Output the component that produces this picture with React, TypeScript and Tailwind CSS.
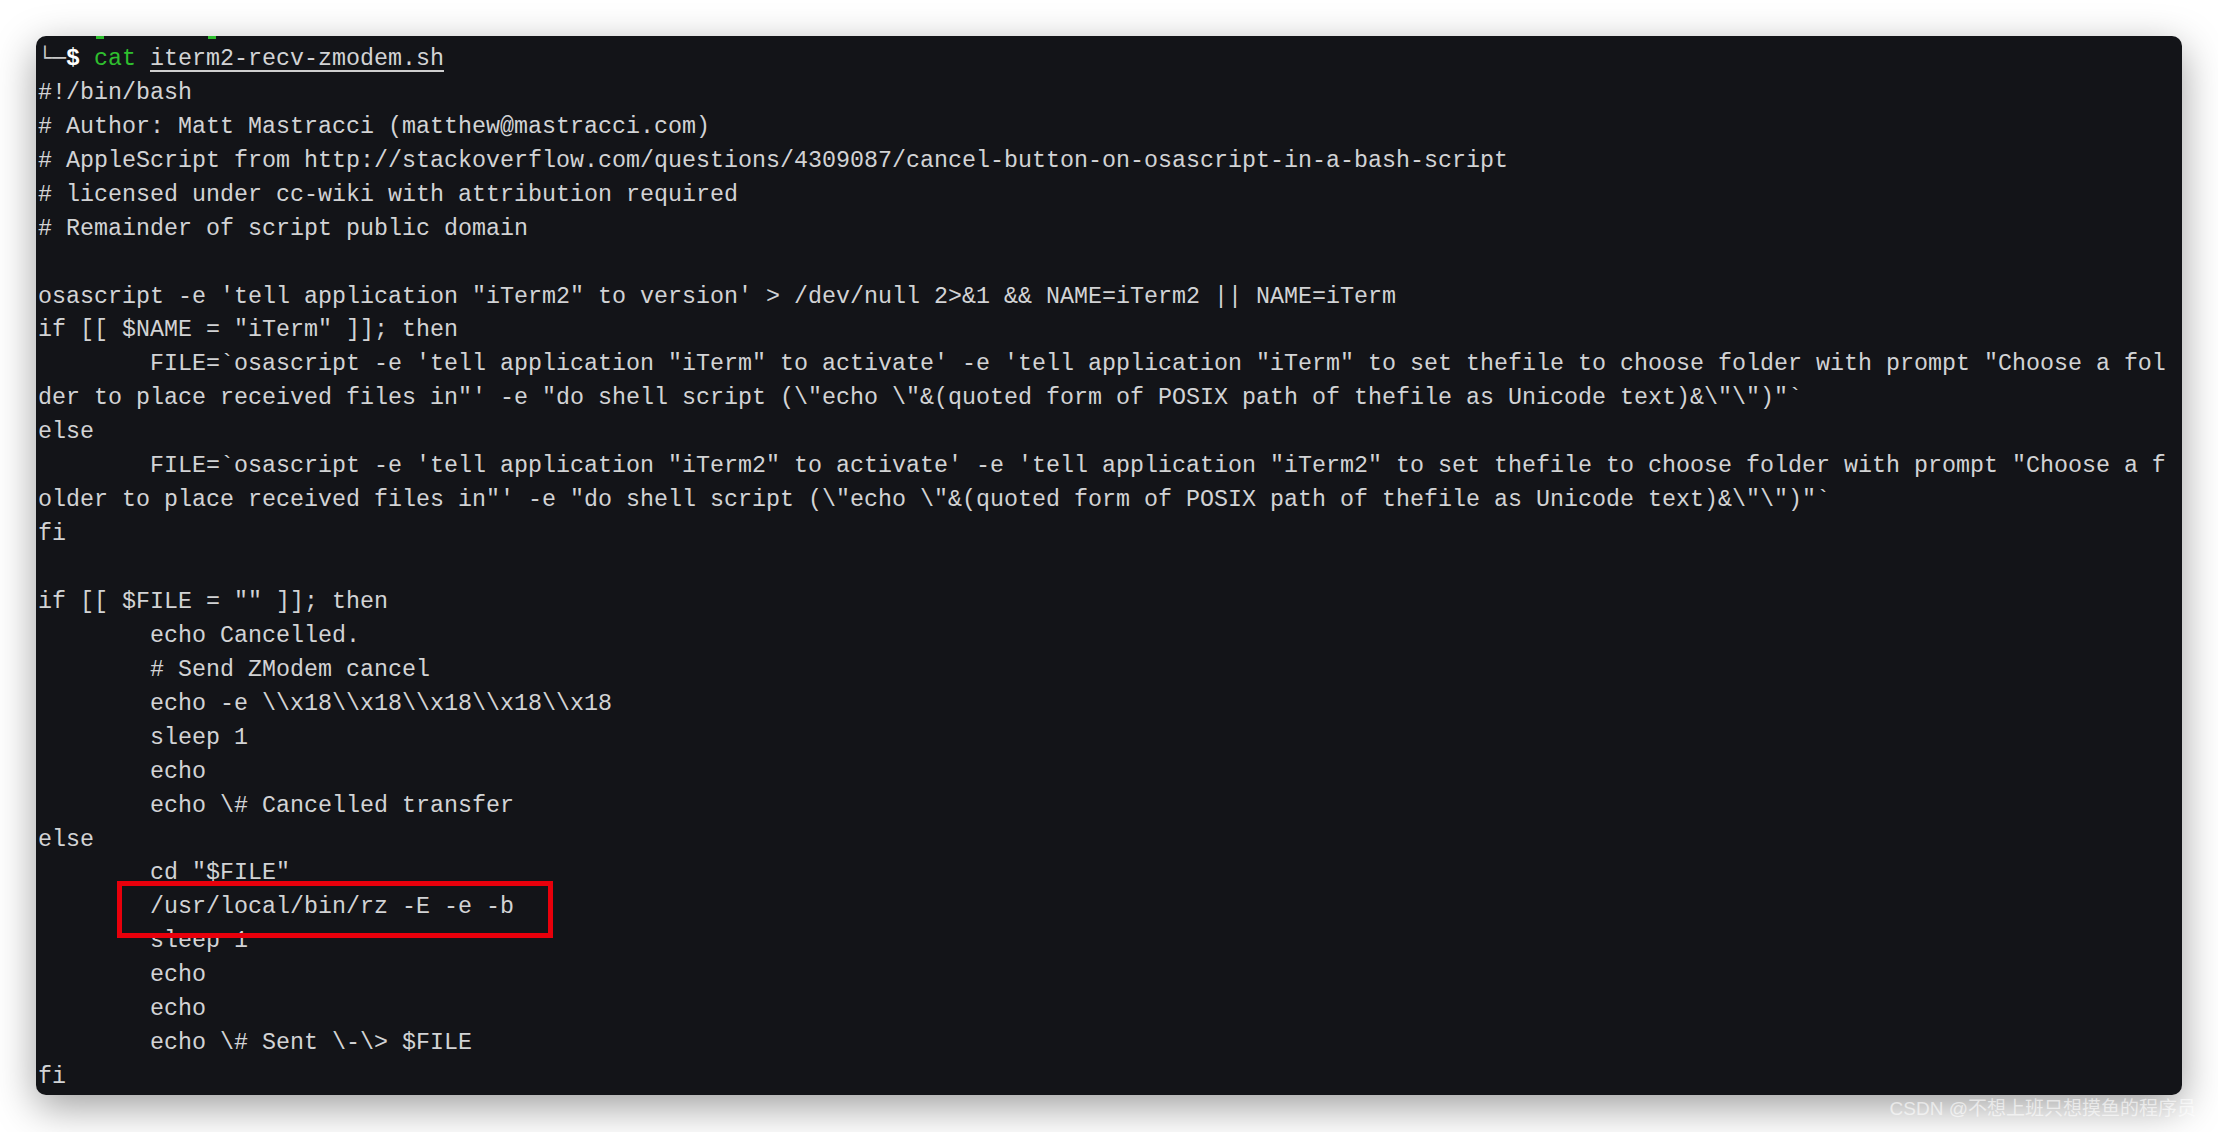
const body: string[] = [
  '#!/bin/bash',
  '# Author: Matt Mastracci (matthew@mastracci.com)',
  '# AppleScript from http://stackoverflow.com/questions/4309087/cancel-button-on-osascript-in-a-bash-script',
  '# licensed under cc-wiki with attribution required',
  '# Remainder of script public domain',
  '',
  'osascript -e \'tell application "iTerm2" to version\' > /dev/null 2>&1 && NAME=iTerm2 || NAME=iTerm',
  'if [[ $NAME = "iTerm" ]]; then',
  '        FILE=`osascript -e \'tell application "iTerm" to activate\' -e \'tell application "iTerm" to set thefile to choose folder with prompt "Choose a fol',
  'der to place received files in"\' -e "do shell script (\\"echo \\"&(quoted form of POSIX path of thefile as Unicode text)&\\"\\")"`',
  'else',
  '        FILE=`osascript -e \'tell application "iTerm2" to activate\' -e \'tell application "iTerm2" to set thefile to choose folder with prompt "Choose a f',
  'older to place received files in"\' -e "do shell script (\\"echo \\"&(quoted form of POSIX path of thefile as Unicode text)&\\"\\")"`',
  'fi',
  '',
  'if [[ $FILE = "" ]]; then',
  '        echo Cancelled.',
  '        # Send ZModem cancel',
  '        echo -e \\\\x18\\\\x18\\\\x18\\\\x18\\\\x18',
  '        sleep 1',
  '        echo',
  '        echo \\# Cancelled transfer',
  'else',
  '        cd "$FILE"',
  '        /usr/local/bin/rz -E -e -b',
  '        sleep 1',
  '        echo',
  '        echo',
  '        echo \\# Sent \\-\\> $FILE',
  'fi',
];

// the line that gets the red box in the screenshot
const MARKED = 24;

function App() {
  return (
    <div className="relative w-[2218px] h-[1132px] bg-white pl-[36px] pt-[36px] overflow-hidden">
      {/* terminal window */}
      <div className="w-[2146px] h-[1059px] rounded-[10px] bg-[#131418] overflow-hidden shadow-[0_12px_40px_rgba(0,0,0,0.38)] flex flex-col">
        {/* green tails of the previous prompt line, cut off by the window top */}
        <div className="h-[4px] flex pl-[60px] gap-[104px]">
          <div className="w-[8px] bg-[#2fbf2f]" />
          <div className="w-[8px] bg-[#2fbf2f]" />
        </div>

        <div className="pl-[2px] pt-[4px] whitespace-pre text-[#d2d3d5] text-[23.33px] leading-[33.95px] font-['Liberation_Mono','DejaVu_Sans_Mono',monospace]">
          <div>
            <span className="text-[#c8c8c8]">└─</span>
            <span className="font-bold text-white">$</span>
            {' '}
            <span className="text-[#2fbf2f]">cat</span>
            {' '}
            <span className="underline underline-offset-[5px] decoration-[#cfcfcf]">iterm2-recv-zmodem.sh</span>
          </div>
          {body.map((line, i) => (
            <div key={i} className="relative h-[33.95px]">
              {line}
              {i === MARKED && (
                <div className="absolute z-10 left-[79px] -top-[10px] w-[436px] h-[57px] border-[5px] border-[#e8000b]" />
              )}
            </div>
          ))}
        </div>
      </div>

      {/* watermark */}
      <div className="absolute right-[22px] bottom-[9px] text-[19px] leading-[28px] text-white/60 font-['Liberation_Sans','Noto_Sans_CJK_SC',sans-serif]">
        CSDN @不想上班只想摸鱼的程序员
      </div>
    </div>
  );
}

export default App;
